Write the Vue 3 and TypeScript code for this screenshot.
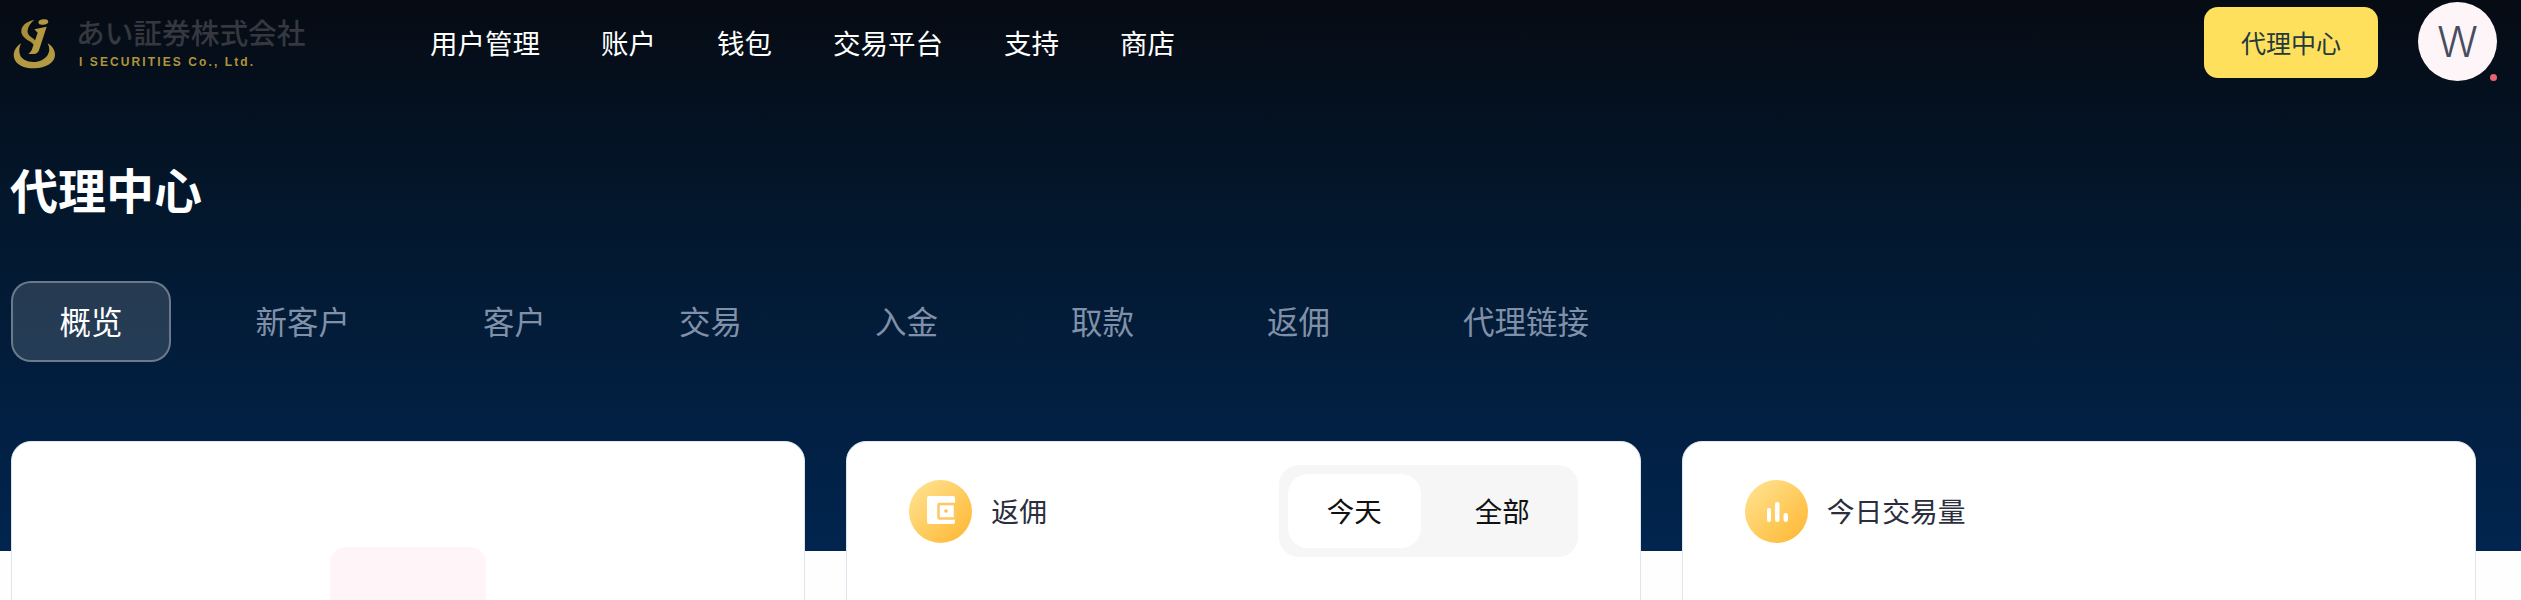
<script setup lang="ts">
const navItems: string[] = ['用户管理', '账户', '钱包', '交易平台', '支持', '商店']
const tabs: string[] = ['概览', '新客户', '客户', '交易', '入金', '取款', '返佣', '代理链接']
</script>

<template>
  <div class="page">
    <header class="topbar">
      <div class="logo">
        <svg class="logo-mark" viewBox="0 0 180 195" aria-hidden="true">
          <path d="M48 100C30 112 24 128 27 143C33 165 60 176 88 175C122 174 150 158 150 135C150 120 141 107 128 100C134 112 135 124 128 135C118 150 100 157 84 156C66 155 50 148 45 134C41 123 43 110 48 100Z" fill="#b39a42" />
          <path d="M88 30C66 34 50 46 49 62C48 78 62 86 74 94C84 100 92 108 94 124L100 122C102 105 94 92 82 84C72 77 66 70 68 60C70 48 78 38 88 30Z" fill="#a8903a" />
          <path d="M88 58L125 50L103 118C100 128 95 132 86 132L70 132C78 126 80 122 83 112L98 68Z" fill="#b39a42" />
          <ellipse cx="115" cy="36" rx="15" ry="8" transform="rotate(-10 115 36)" fill="#b39a42" />
        </svg>
        <div class="logo-text">
          <span class="logo-jp">あい証券株式会社</span>
          <span class="logo-en">I SECURITIES Co., Ltd.</span>
        </div>
      </div>
      <nav class="nav">
        <a v-for="item in navItems" :key="item" class="nav-item">{{ item }}</a>
      </nav>
      <div class="top-actions">
        <button class="agent-btn">代理中心</button>
        <div class="avatar">
          W
          <span class="avatar-dot"></span>
        </div>
      </div>
    </header>

    <h1 class="page-title">代理中心</h1>

    <div class="tabs">
      <div
        v-for="(tab, i) in tabs"
        :key="tab"
        class="tab"
        :class="{ active: i === 0 }"
      >
        {{ tab }}
      </div>
    </div>

    <div class="cards">
      <section class="card card-profile">
        <div class="pink-box"></div>
      </section>

      <section class="card">
        <div class="card-head">
          <div class="card-label">
            <span class="badge">
              <svg viewBox="0 0 63 63" width="63" height="63" aria-hidden="true">
                <rect x="18" y="16" width="28" height="28" rx="2" fill="#fff" />
                <rect x="29.5" y="24" width="16.5" height="14.5" rx="1" fill="#fff" stroke="#fdc862" stroke-width="2.5" />
                <circle cx="37" cy="31" r="1.8" fill="#fdc04f" />
              </svg>
            </span>
            <span class="label-text">返佣</span>
          </div>
          <div class="segment">
            <span class="segment-item on">今天</span>
            <span class="segment-item">全部</span>
          </div>
        </div>
      </section>

      <section class="card">
        <div class="card-head">
          <div class="card-label">
            <span class="badge">
              <svg viewBox="0 0 63 63" width="63" height="63" aria-hidden="true">
                <rect x="22" y="28" width="4" height="14" rx="2" fill="#fff" />
                <rect x="30" y="22" width="4.5" height="20" rx="2.2" fill="#fff" />
                <rect x="38.5" y="33" width="4.5" height="9" rx="2.2" fill="#fff" />
              </svg>
            </span>
            <span class="label-text">今日交易量</span>
          </div>
        </div>
      </section>
    </div>
  </div>
</template>

<style>
html,
body {
  margin: 0;
  overflow: hidden;
}
</style>

<style scoped>
.page {
  height: 600px;
  overflow: hidden;
  font-family: "Noto Sans CJK SC", "Noto Sans", sans-serif;
  background: linear-gradient(180deg, #060b13 0%, #03182f 42%, #01254f 100%) 0 0 / 100% 551px no-repeat, #fefefe;
}

.topbar {
  display: flex;
  align-items: center;
  height: 84px;
  padding: 0 24px 0 5px;
}

.logo {
  display: flex;
  align-items: center;
  gap: 11px;
  width: 425px;
  flex-shrink: 0;
}

.logo-mark {
  width: 60px;
  height: 65px;
  flex-shrink: 0;
}

.logo-text {
  display: flex;
  flex-direction: column;
  gap: 7px;
  margin-top: 1px;
}

.logo-jp {
  font-family: "Noto Sans CJK JP", sans-serif;
  font-size: 28.7px;
  font-weight: 500;
  line-height: 32px;
  color: #35383f;
  white-space: nowrap;
}

.logo-en {
  font-family: "Liberation Sans", sans-serif;
  font-size: 12px;
  font-weight: 700;
  line-height: 14px;
  letter-spacing: 2.1px;
  color: #ae9538;
  padding-left: 3px;
  white-space: nowrap;
}

.nav {
  display: flex;
  gap: 61px;
}

.nav-item {
  font-size: 27.5px;
  color: #fff;
  white-space: nowrap;
}

.top-actions {
  display: flex;
  align-items: center;
  gap: 40px;
  margin-left: auto;
}

.agent-btn {
  width: 174px;
  height: 71px;
  border: none;
  border-radius: 14px;
  background: #ffe05c;
  color: #1f3a3f;
  font-family: inherit;
  font-size: 25px;
}

.avatar {
  position: relative;
  width: 79px;
  height: 79px;
  border-radius: 50%;
  background: #fef5f8;
  color: #474c60;
  display: flex;
  align-items: center;
  justify-content: center;
  font-family: Inter, sans-serif;
  font-size: 42px;
  font-weight: 300;
  margin-top: -1px;
}

.avatar-dot {
  position: absolute;
  right: 0;
  bottom: 0;
  width: 7px;
  height: 7px;
  border-radius: 50%;
  background: #e8656f;
}

.page-title {
  margin: 70px 0 0 10px;
  font-size: 48px;
  line-height: 68px;
  font-weight: 700;
  color: #fff;
}

.tabs {
  display: flex;
  gap: 36px;
  margin: 59px 0 0 11px;
}

.tab {
  box-sizing: border-box;
  height: 81px;
  padding: 0 46.5px 3px;
  display: flex;
  align-items: center;
  font-size: 31.5px;
  color: #8090a8;
  border: 2px solid transparent;
  border-radius: 20px;
  white-space: nowrap;
}

.tab.active {
  color: #fff;
  background: rgba(255, 255, 255, 0.14);
  border-color: rgba(255, 255, 255, 0.32);
}

.cards {
  display: grid;
  grid-template-columns: repeat(3, 1fr);
  gap: 41px;
  margin-top: 79px;
  padding: 0 45px 0 11px;
}

.card {
  box-sizing: border-box;
  height: 500px;
  background: #fff;
  border: 1px solid #dde6ee;
  border-radius: 20px;
}

.card-profile {
  display: flex;
  justify-content: center;
  padding-top: 105px;
}

.pink-box {
  width: 156px;
  height: 156px;
  border-radius: 16px;
  background: #fff5f8;
}

.card-head {
  display: flex;
  align-items: center;
  justify-content: space-between;
  min-height: 92px;
  padding: 23px 62px 0;
}

.card-label {
  display: flex;
  align-items: center;
  gap: 19px;
}

.badge {
  display: block;
  width: 63px;
  height: 63px;
  border-radius: 50%;
  background: linear-gradient(135deg, #ffe596 0%, #ffb52e 100%);
}

.badge svg {
  display: block;
}

.label-text {
  font-size: 27.8px;
  color: #2a2e3d;
  padding-bottom: 2px;
}

.segment {
  display: flex;
  gap: 15px;
  padding: 9px;
  background: #f6f6f6;
  border-radius: 20px;
}

.segment-item {
  box-sizing: border-box;
  width: 133px;
  height: 74px;
  padding-bottom: 2px;
  display: flex;
  align-items: center;
  justify-content: center;
  font-size: 27.5px;
  color: #111;
  border-radius: 20px;
}

.segment-item.on {
  background: #fff;
}
</style>
